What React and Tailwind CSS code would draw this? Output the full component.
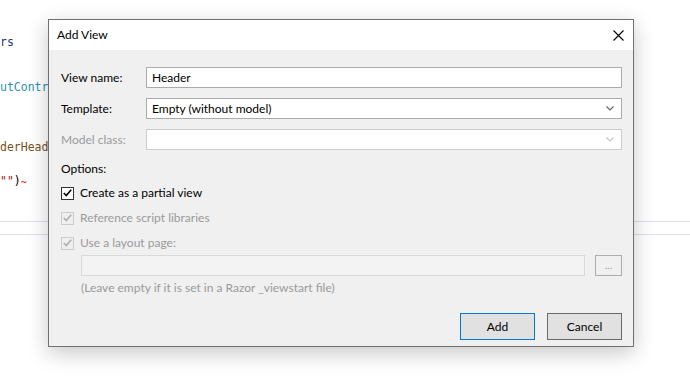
import React from "react";

const ui = { fontFamily: 'Lato, "Noto Sans", "Segoe UI", sans-serif' };
const mono = { fontFamily: '"DejaVu Sans Mono", "Liberation Mono", monospace' };

function Chevron({ disabled }) {
  return (
    <svg width="8" height="5" viewBox="0 0 8 5" className="shrink-0">
      <path d="M0.5 0.5 L4 4 L7.5 0.5" fill="none" stroke={disabled ? "#c4c4c4" : "#606060"} strokeWidth="1.1" />
    </svg>
  );
}

function Check({ disabled }) {
  return (
    <div
      className={
        "w-[13px] h-[13px] border flex items-center justify-center shrink-0 " +
        (disabled ? "border-[#cccccc] bg-[#eeeeee]" : "border-[#333333] bg-white")
      }
    >
      <svg width="9" height="8" viewBox="0 0 9 8">
        <path d="M0.8 4 L3.3 6.6 L8.2 0.8" fill="none" stroke={disabled ? "#b0b0b0" : "#000"} strokeWidth="1.6" />
      </svg>
    </div>
  );
}

export default function App() {
  return (
    <div className="relative w-[690px] h-[389px] bg-white overflow-hidden" style={ui}>
      {/* background editor */}
      <div className="text-[11.5px] leading-[18px]" style={mono}>
        <div className="h-[33px]" />
        <div className="text-[#1f377f]">rs</div>
        <div className="h-[27px]" />
        <div className="text-[#2b91af]">utControl</div>
        <div className="h-[42px]" />
        <div className="text-[#74531f]">derHeader</div>
        <div className="h-[16px]" />
        <div className="flex">
          <span className="text-[#a31515]">""</span>
          <span className="text-black">)</span>
          <span className="text-[#e51400] text-[10px] leading-[22px]">~</span>
        </div>
        <div className="h-[27px]" />
        <div className="h-px bg-[#e0e0ea]" />
        <div className="h-[12px]" />
        <div className="h-px bg-[#e0e0ea]" />
      </div>

      {/* dialog */}
      <div className="absolute left-[48px] top-[19px] w-[586px] h-[328px] border border-[#707070] bg-[#f0f0f0] shadow-[0_6px_20px_rgba(0,0,0,0.22)] text-[12px] text-black flex flex-col">
        <div className="h-[30px] bg-white flex items-center justify-between pl-[8px] pr-[9px]">
          <span className="text-[12px]">Add View</span>
          <svg width="11" height="11" viewBox="0 0 11 11">
            <path d="M0.5 0.5 L10.5 10.5 M10.5 0.5 L0.5 10.5" stroke="#000" strokeWidth="1.1" />
          </svg>
        </div>

        <div className="flex flex-col pl-[12px] pr-[11px] pt-[17px]">
          <div className="flex items-center h-[21px]">
            <span className="w-[85px]">View name:</span>
            <div className="flex-1 h-[21px] border border-[#ababab] bg-white flex items-center pl-[5px]">Header</div>
          </div>
          <div className="flex items-center h-[21px] mt-[10px]">
            <span className="w-[85px]">Template:</span>
            <div className="flex-1 h-[21px] border border-[#ababab] bg-white flex items-center justify-between pl-[5px] pr-[7px]">
              <span>Empty (without model)</span>
              <Chevron />
            </div>
          </div>
          <div className="flex items-center h-[21px] mt-[10px]">
            <span className="w-[85px] text-[#9a9a9a]">Model class:</span>
            <div className="flex-1 h-[21px] border border-[#cccccc] bg-white flex items-center justify-end pr-[7px]">
              <Chevron disabled />
            </div>
          </div>

          <div className="mt-[10px] h-[18px] flex items-center">Options:</div>

          <div className="flex items-center gap-[6px] mt-[8px] h-[14px]">
            <Check />
            <span>Create as a partial view</span>
          </div>
          <div className="flex items-center gap-[6px] mt-[11px] h-[14px] text-[#9a9a9a]">
            <Check disabled />
            <span>Reference script libraries</span>
          </div>
          <div className="flex items-center gap-[6px] mt-[11px] h-[14px] text-[#9a9a9a]">
            <Check disabled />
            <span>Use a layout page:</span>
          </div>

          <div className="flex items-center mt-[5px] pl-[20px] h-[21px]">
            <div className="flex-1 h-[21px] border border-[#d9d9d9] bg-[#f3f3f3]" />
            <div className="ml-[10px] w-[27px] h-[21px] border border-[#adadad] bg-[#f0f0f0] flex items-center justify-center text-[#9a9a9a] text-[10px] leading-none pb-[2px]">
              ...
            </div>
          </div>
          <div className="pl-[20px] mt-[4px] h-[16px] flex items-center text-[#9a9a9a]">
            (Leave empty if it is set in a Razor _viewstart file)
          </div>

          <div className="flex justify-end gap-[12px] mt-[17px]">
            <div className="w-[75px] h-[27px] border border-[#0078d7] bg-[#e1e1e1] flex items-center justify-center">Add</div>
            <div className="w-[75px] h-[27px] border border-[#6a6a6a] bg-[#e1e1e1] flex items-center justify-center">Cancel</div>
          </div>
        </div>
      </div>
    </div>
  );
}
